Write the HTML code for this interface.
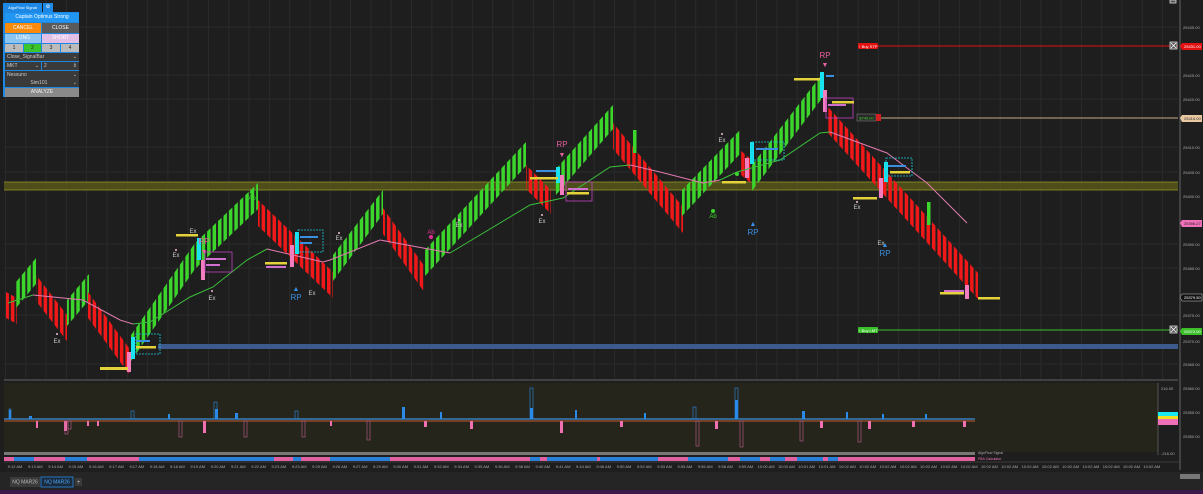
<!DOCTYPE html>
<html><head><meta charset="utf-8"><style>
html,body{margin:0;padding:0;background:#1e1e1e;width:1203px;height:494px;overflow:hidden;font-family:"Liberation Sans",sans-serif}
.p{position:absolute;font-size:5px;color:#fff;text-align:center;line-height:9px;box-sizing:border-box}
</style></head><body>
<svg width="1203" height="494" style="position:absolute;left:0;top:0" font-family="Liberation Sans, sans-serif">
<defs>
<pattern id="G" width="5.45" height="10" patternUnits="userSpaceOnUse"><rect width="3.5" height="10" fill="#3bd52c"/></pattern>
<pattern id="R" width="5.45" height="10" patternUnits="userSpaceOnUse"><rect width="3.5" height="10" fill="#f01818"/></pattern>
<pattern id="vg" width="20.3" height="10" x="5" patternUnits="userSpaceOnUse"><rect width="1" height="10" fill="#2a2a2a"/></pattern>
</defs>
<rect width="1203" height="494" fill="#1e1e1e"/>
<rect x="4" y="0" width="1174" height="380" fill="url(#vg)"/>
<g stroke="#292929" stroke-width="1">
<line x1="4" y1="27" x2="1178" y2="27"/><line x1="4" y1="75" x2="1178" y2="75"/><line x1="4" y1="99" x2="1178" y2="99"/><line x1="4" y1="147" x2="1178" y2="147"/><line x1="4" y1="172" x2="1178" y2="172"/><line x1="4" y1="244" x2="1178" y2="244"/><line x1="4" y1="268" x2="1178" y2="268"/><line x1="4" y1="315" x2="1178" y2="315"/><line x1="4" y1="364" x2="1178" y2="364"/>
</g>
<!-- bands -->
<rect x="4" y="182" width="1174" height="8" fill="#5a5a1a" opacity="0.8"/>
<line x1="4" y1="182" x2="1178" y2="182" stroke="#9a9a28" stroke-width="0.8"/>
<line x1="4" y1="190" x2="1178" y2="190" stroke="#9a9a28" stroke-width="0.8"/>
<rect x="158" y="344" width="1020" height="5" fill="#3d5a8f"/>
<line x1="4" y1="380" x2="1178" y2="380" stroke="#555" stroke-width="1.2"/>
<!-- bars -->
<polygon fill="url(#R)" points="6,292 17,298 17,324 6,318"/>
<polygon fill="url(#G)" points="16,282 36,258 36,284 16,308"/>
<polygon fill="url(#R)" points="36,275 67,315 67,341 36,301"/>
<polygon fill="url(#G)" points="67,300 89,274 89,300 67,326"/>
<polygon fill="url(#R)" points="88,292 129,348 129,374 88,318"/>
<polygon fill="url(#G)" points="131,335 195,243 195,269 131,361"/>
<polygon fill="url(#G)" points="195,243 258,183 258,209 195,269"/>
<polygon fill="url(#R)" points="258,200 333,272 333,298 258,226"/>
<polygon fill="url(#G)" points="333,255 383,190 383,214 333,281"/>
<polygon fill="url(#R)" points="383,208 425,267 425,293 383,234"/>
<polygon fill="url(#G)" points="425,250 526,142 526,166 425,276"/>
<polygon fill="url(#R)" points="526,165 551,190 551,214 526,189"/>
<polygon fill="url(#G)" points="555,170 613,105 613,129 555,196"/>
<polygon fill="url(#R)" points="613,123 683,207 683,233 613,149"/>
<polygon fill="url(#G)" points="682,190 740,130 740,154 682,216"/>
<polygon fill="url(#R)" points="740,150 752,160 752,184 740,174"/>
<polygon fill="url(#G)" points="752,165 823,73 823,97 752,191"/>
<polygon fill="url(#R)" points="828,107 978,273 978,299 828,133"/>
<rect x="633" y="130" width="3.5" height="23" fill="#3bd52c"/>
<rect x="927" y="202" width="3.5" height="23" fill="#3bd52c"/>
<rect x="820" y="72" width="4" height="26" fill="#19e3f0"/>
<rect x="823" y="90" width="4" height="22" fill="#f27ec0"/>
<rect x="131" y="337" width="4" height="22" fill="#19e3f0"/>
<rect x="127" y="352" width="4" height="20" fill="#f27ec0"/>
<rect x="201" y="260" width="4" height="20" fill="#f27ec0"/>
<rect x="197" y="238" width="4" height="22" fill="#19e3f0"/>
<rect x="295" y="232" width="4" height="22" fill="#19e3f0"/>
<rect x="290" y="245" width="4" height="22" fill="#f27ec0"/>
<rect x="560" y="175" width="4" height="20" fill="#f27ec0"/>
<rect x="556" y="167" width="4" height="16" fill="#19e3f0"/>
<rect x="750" y="142" width="4" height="22" fill="#19e3f0"/>
<rect x="745" y="158" width="4" height="20" fill="#f27ec0"/>
<rect x="884" y="162" width="4" height="20" fill="#19e3f0"/>
<rect x="879" y="178" width="4" height="20" fill="#f27ec0"/>
<rect x="965" y="285" width="4" height="14" fill="#f27ec0"/>
<!-- MA -->
<polyline fill="none" stroke="#3bbf3b" stroke-width="1" points="8,303 33,295"/>
<polyline fill="none" stroke="#e07ab0" stroke-width="1" points="33,295 83,300 120,320 133,324"/>
<polyline fill="none" stroke="#3bbf3b" stroke-width="1" points="133,324 150,322 190,297 213,287 247,260 267,249"/>
<polyline fill="none" stroke="#e07ab0" stroke-width="1" points="267,249 323,262 330,260 380,240"/>
<polyline fill="none" stroke="#e07ab0" stroke-width="1" points="380,240 450,253"/>
<polyline fill="none" stroke="#3bbf3b" stroke-width="1" points="450,253 530,205 563,198 610,167 630,165"/>
<polyline fill="none" stroke="#e07ab0" stroke-width="1" points="630,165 660,172 703,183 720,180"/>
<polyline fill="none" stroke="#3bbf3b" stroke-width="1" points="720,180 737,172 780,160 820,133 830,132"/>
<polyline fill="none" stroke="#e07ab0" stroke-width="1" points="830,132 887,153 927,183 967,223"/>
<!-- footprint boxes -->
<g fill="none" stroke-width="0.8">
<rect x="136" y="334" width="24" height="20" stroke="#19c8d8" stroke-dasharray="2,1"/>
<rect x="205" y="252" width="27" height="20" stroke="#c040c0"/>
<rect x="298" y="230" width="25" height="22" stroke="#19c8d8" stroke-dasharray="2,1"/>
<rect x="566" y="182" width="26" height="19" stroke="#c040c0"/>
<rect x="752" y="142" width="32" height="18" stroke="#19c8d8" stroke-dasharray="2,1"/>
<rect x="826" y="98" width="27" height="20" stroke="#c040c0"/>
<rect x="886" y="158" width="26" height="18" stroke="#19c8d8" stroke-dasharray="2,1"/>
</g>
<g fill="#3a8fe0">
<rect x="136" y="340" width="14" height="2"/><rect x="300" y="236" width="18" height="2"/><rect x="300" y="242" width="12" height="2"/><rect x="536" y="170" width="20" height="2"/><rect x="756" y="148" width="22" height="2"/><rect x="888" y="165" width="18" height="2"/><rect x="826" y="75" width="8" height="2"/>
</g>
<g fill="#d070d0">
<rect x="206" y="258" width="20" height="2"/><rect x="206" y="264" width="14" height="2"/><rect x="568" y="188" width="20" height="2"/><rect x="828" y="104" width="18" height="2"/><rect x="944" y="290" width="20" height="3"/><rect x="266" y="266" width="20" height="2"/>
</g>
<g fill="#e3d23a">
<rect x="100" y="367" width="28" height="3"/><rect x="176" y="234" width="22" height="2.5"/><rect x="265" y="262" width="22" height="2.5"/><rect x="530" y="177" width="28" height="2.5"/><rect x="722" y="181" width="24" height="2.5"/><rect x="794" y="78" width="26" height="2.5"/><rect x="832" y="101" width="22" height="2.5"/><rect x="853" y="197" width="24" height="2.5"/><rect x="940" y="292" width="24" height="2.5"/><rect x="978" y="297" width="22" height="2.5"/><rect x="890" y="171" width="20" height="2.5"/><rect x="567" y="192" width="22" height="2.5"/><rect x="136" y="346" width="20" height="2.5"/>
</g>
<!-- markers -->
<g font-size="8" text-anchor="middle">
<text x="204" y="244" fill="#e860a0">RP</text><text x="204" y="254" fill="#e860a0" font-size="7">▼</text>
<text x="562" y="147" fill="#e860a0">RP</text><text x="562" y="157" fill="#e860a0" font-size="7">▼</text>
<text x="825" y="58" fill="#e860a0">RP</text><text x="825" y="67" fill="#e860a0" font-size="7">▼</text>
<text x="131" y="390" fill="#3a8fe0" font-size="7">▲</text><text x="131" y="400" fill="#3a8fe0">RP</text>
<text x="296" y="291" fill="#3a8fe0" font-size="7">▲</text><text x="296" y="300" fill="#3a8fe0">RP</text>
<text x="753" y="226" fill="#3a8fe0" font-size="7">▲</text><text x="753" y="235" fill="#3a8fe0">RP</text>
<text x="885" y="247" fill="#3a8fe0" font-size="7">▲</text><text x="885" y="256" fill="#3a8fe0">RP</text>
</g>
<g font-size="6" fill="#ccc" text-anchor="middle">
<text x="57" y="343">Ex</text><text x="176" y="257">Ex</text><text x="193" y="233">Ex</text><text x="212" y="300">Ex</text><text x="312" y="295">Ex</text><text x="339" y="240">Ex</text><text x="459" y="227">Ex</text><text x="542" y="223">Ex</text><text x="722" y="142">Ex</text><text x="857" y="209">Ex</text><text x="881" y="245">Ex</text>
<text x="252" y="200" fill="#3bd52c">Ab</text><text x="713" y="218" fill="#3bd52c">Ab</text><text x="431" y="234" fill="#e03090">Ab</text>
</g>
<g fill="#f0c0d8"><circle cx="57" cy="334" r="1"/><circle cx="176" cy="250" r="1"/><circle cx="212" cy="291" r="1"/><circle cx="339" cy="233" r="1"/><circle cx="459" cy="220" r="1"/><circle cx="542" cy="215" r="1"/><circle cx="722" cy="134" r="1"/><circle cx="857" cy="202" r="1"/></g>
<circle cx="252" cy="192" r="2" fill="#3bd52c"/><circle cx="713" cy="211" r="2" fill="#3bd52c"/><circle cx="431" cy="237" r="2" fill="#e03090"/><circle cx="737" cy="174" r="2" fill="#3bd52c"/>
<!-- order lines -->
<line x1="878" y1="46" x2="1178" y2="46" stroke="#e31010" stroke-width="1"/>
<rect x="858" y="43" width="20" height="6" rx="1" fill="#e31010"/><text x="868" y="47.8" font-size="4" fill="#fff" text-anchor="middle">↑ Buy STP</text>
<line x1="880" y1="118" x2="1178" y2="118" stroke="#c8a888" stroke-width="1"/>
<rect x="857" y="114" width="19" height="7" fill="#2a2a2a" stroke="#888" stroke-width="0.5"/><text x="866.5" y="119.5" font-size="4" fill="#3bd52c" text-anchor="middle">$740.00</text>
<rect x="876" y="114" width="5" height="7" fill="#d02020"/>
<line x1="878" y1="330" x2="1178" y2="330" stroke="#3bc02c" stroke-width="1"/>
<rect x="858" y="327" width="20" height="6" rx="1" fill="#3bc02c"/><text x="868" y="331.8" font-size="4" fill="#fff" text-anchor="middle">↑ Buy LMT</text>
<g stroke="#ddd" stroke-width="0.8" fill="#555"><rect x="1170" y="42" width="7" height="7"/><rect x="1170" y="326" width="7" height="7"/><rect x="1170" y="0" width="6" height="3"/></g>
<g stroke="#fff" stroke-width="0.8"><path d="M1171 43l5 5M1176 43l-5 5M1171 327l5 5M1176 327l-5 5"/></g>
<!-- right axis -->
<line x1="1180" y1="0" x2="1180" y2="470" stroke="#777" stroke-width="0.8"/>
<g font-size="4" fill="#aaa">
<text x="1183" y="29">25435.00</text><text x="1183" y="77">25425.00</text><text x="1183" y="101">25420.00</text><text x="1183" y="149">25410.00</text><text x="1183" y="174">25405.00</text><text x="1183" y="198">25400.00</text><text x="1183" y="246">25390.00</text><text x="1183" y="270">25385.00</text><text x="1183" y="317">25375.00</text><text x="1183" y="343">25370.00</text><text x="1183" y="366">25365.00</text><text x="1183" y="390">25360.00</text><text x="1183" y="414">25355.00</text><text x="1183" y="438">25350.00</text>
</g>
<path d="M1180 46l2-3h20v7h-20z" fill="#e31010"/><text x="1184" y="48" font-size="4" fill="#fff">25431.00</text>
<path d="M1180 118l2-3h20v7h-20z" fill="#e8c8a0"/><text x="1184" y="120" font-size="4" fill="#333">25416.00</text>
<path d="M1180 223l2-3h20v7h-20z" fill="#f070b8"/><text x="1184" y="225" font-size="4" fill="#222">25396.27</text>
<path d="M1180 297l2-3h20v7h-20z" fill="#111" stroke="#ccc" stroke-width="0.5"/><text x="1184" y="299" font-size="4" fill="#fff">25379.50</text>
<path d="M1180 331l2-3h20v7h-20z" fill="#3bc02c"/><text x="1184" y="333" font-size="4" fill="#fff">25372.00</text>
<!-- lower pane -->
<rect x="4" y="383" width="1154" height="69" fill="#26251b"/>
<line x1="1158" y1="383" x2="1158" y2="455" stroke="#777" stroke-width="0.6"/>
<text x="1161" y="390" font-size="4" fill="#aaa">216.00</text><text x="1161" y="455" font-size="4" fill="#aaa">-216.00</text>
<line x1="4" y1="421" x2="975" y2="421" stroke="#c06030" stroke-width="1"/>
<line x1="4" y1="419" x2="975" y2="419" stroke="#3a8fe0" stroke-width="1.2"/>
<g fill="#2a8ae8">
<rect x="9" y="410" width="2" height="9"/><rect x="29" y="416" width="3" height="3"/><rect x="168" y="414" width="2" height="5"/><rect x="215" y="409" width="3" height="10"/><rect x="235" y="413" width="3" height="6"/><rect x="402" y="407" width="3" height="12"/><rect x="440" y="412" width="2" height="7"/><rect x="530" y="408" width="3" height="11"/><rect x="575" y="410" width="2" height="9"/><rect x="644" y="413" width="2" height="6"/><rect x="735" y="400" width="3" height="19"/><rect x="802" y="411" width="3" height="8"/><rect x="846" y="412" width="2" height="7"/><rect x="1008" y="0" width="0" height="0"/><rect x="882" y="414" width="2" height="5"/><rect x="925" y="414" width="2" height="5"/>
</g>
<g fill="none" stroke="#2a8ae8" stroke-width="0.6"><rect x="9" y="409" width="2" height="10"/><rect x="214" y="402" width="3" height="17"/><rect x="131" y="411" width="3" height="8"/><rect x="295" y="411" width="3" height="8"/><rect x="530" y="388" width="3" height="31"/><rect x="735" y="388" width="3" height="31"/><rect x="693" y="407" width="3" height="12"/></g>
<g fill="#f070b0">
<rect x="36" y="421" width="2" height="7"/><rect x="64" y="421" width="3" height="10"/><rect x="87" y="421" width="2" height="5"/><rect x="97" y="421" width="2" height="5"/><rect x="203" y="421" width="3" height="12"/><rect x="330" y="421" width="2" height="5"/><rect x="424" y="421" width="3" height="6"/><rect x="470" y="421" width="3" height="8"/><rect x="560" y="421" width="3" height="12"/><rect x="620" y="421" width="3" height="6"/><rect x="715" y="421" width="3" height="8"/><rect x="820" y="421" width="3" height="7"/><rect x="868" y="421" width="3" height="8"/><rect x="912" y="421" width="3" height="6"/><rect x="963" y="421" width="3" height="6"/>
</g>
<g fill="none" stroke="#c06090" stroke-width="0.6"><rect x="65" y="421" width="3" height="13"/><rect x="68" y="421" width="3" height="8"/><rect x="179" y="421" width="3" height="16"/><rect x="244" y="421" width="3" height="16"/><rect x="302" y="421" width="3" height="16"/><rect x="367" y="421" width="3" height="19"/><rect x="696" y="421" width="3" height="25"/><rect x="800" y="421" width="3" height="20"/><rect x="858" y="421" width="3" height="21"/><rect x="740" y="421" width="3" height="26"/></g>
<rect x="1158" y="412" width="20" height="4" fill="#1ae8f0"/><rect x="1158" y="416" width="20" height="3" fill="#f0e020"/><rect x="1158" y="419" width="20" height="6" fill="#f070b8"/>
<rect x="4" y="452" width="971" height="3" fill="#777"/>
<text x="978" y="454" font-size="3.5" fill="#aaa">AlgoFlow Signal</text><text x="978" y="460" font-size="3.5" fill="#f070b8">FBA Calculator</text>
<!-- color strip -->
<g>
<rect x="4" y="457" width="971" height="4" fill="#e060a0"/>
<rect x="14" y="457" width="20" height="4" fill="#2a7fd8"/><rect x="65" y="457" width="22" height="4" fill="#2a7fd8"/><rect x="139" y="457" width="135" height="4" fill="#2a7fd8"/><rect x="293" y="457" width="8" height="4" fill="#2a7fd8"/><rect x="330" y="457" width="60" height="4" fill="#2a7fd8"/><rect x="530" y="457" width="10" height="4" fill="#2a7fd8"/><rect x="547" y="457" width="50" height="4" fill="#2a7fd8"/><rect x="600" y="457" width="58" height="4" fill="#2a7fd8"/><rect x="647" y="457" width="5" height="4" fill="#2a7fd8"/><rect x="688" y="457" width="40" height="4" fill="#2a7fd8"/><rect x="740" y="457" width="20" height="4" fill="#2a7fd8"/><rect x="770" y="457" width="15" height="4" fill="#2a7fd8"/><rect x="797" y="457" width="26" height="4" fill="#2a7fd8"/><rect x="828" y="457" width="10" height="4" fill="#2a7fd8"/>
</g>
<!-- time axis -->
<line x1="4" y1="462" x2="1180" y2="462" stroke="#555" stroke-width="0.5"/>
<g font-size="4" fill="#aaa" text-anchor="middle">
<text x="15" y="468">9:12 AM</text><text x="35.3" y="468">9:13 AM</text><text x="55.6" y="468">9:14 AM</text><text x="75.9" y="468">9:15 AM</text><text x="96.2" y="468">9:16 AM</text><text x="116.5" y="468">9:17 AM</text><text x="136.8" y="468">9:17 AM</text><text x="157.1" y="468">9:18 AM</text><text x="177.4" y="468">9:18 AM</text><text x="197.7" y="468">9:19 AM</text><text x="218" y="468">9:20 AM</text><text x="238.3" y="468">9:21 AM</text><text x="258.6" y="468">9:22 AM</text><text x="278.9" y="468">9:23 AM</text><text x="299.2" y="468">9:23 AM</text><text x="319.5" y="468">9:25 AM</text><text x="339.8" y="468">9:26 AM</text><text x="360.1" y="468">9:27 AM</text><text x="380.4" y="468">9:29 AM</text><text x="400.7" y="468">9:30 AM</text><text x="421" y="468">9:31 AM</text><text x="441.3" y="468">9:32 AM</text><text x="461.6" y="468">9:34 AM</text><text x="481.9" y="468">9:35 AM</text><text x="502.2" y="468">9:36 AM</text><text x="522.5" y="468">9:38 AM</text><text x="542.8" y="468">9:40 AM</text><text x="563.1" y="468">9:41 AM</text><text x="583.4" y="468">9:44 AM</text><text x="603.7" y="468">9:46 AM</text><text x="624" y="468">9:50 AM</text><text x="644.3" y="468">9:52 AM</text><text x="664.6" y="468">9:53 AM</text><text x="684.9" y="468">9:55 AM</text><text x="705.2" y="468">9:56 AM</text><text x="725.5" y="468">9:58 AM</text><text x="745.8" y="468">9:59 AM</text><text x="766.1" y="468">10:00 AM</text><text x="786.4" y="468">10:00 AM</text><text x="806.7" y="468">10:01 AM</text><text x="827" y="468">10:01 AM</text><text x="847.3" y="468">10:02 AM</text><text x="867.6" y="468">10:02 AM</text><text x="887.9" y="468">10:02 AM</text><text x="908.2" y="468">10:02 AM</text><text x="928.5" y="468">10:02 AM</text><text x="948.8" y="468">10:02 AM</text><text x="969.1" y="468">10:02 AM</text><text x="989.4" y="468">10:02 AM</text><text x="1009.7" y="468">10:02 AM</text><text x="1030" y="468">10:02 AM</text><text x="1050.3" y="468">10:02 AM</text><text x="1070.6" y="468">10:02 AM</text><text x="1090.9" y="468">10:02 AM</text><text x="1111.2" y="468">10:02 AM</text><text x="1131.5" y="468">10:02 AM</text><text x="1151.8" y="468">10:02 AM</text>
</g>
<rect x="3" y="474" width="4" height="4" fill="none" stroke="#ccc" stroke-width="0.7"/>
<rect x="0" y="472" width="1203" height="18" fill="#252525"/>
<rect x="10" y="477" width="30" height="10" fill="#3a3a3a"/><text x="25" y="483.5" font-size="5" fill="#bbb" text-anchor="middle">NQ MAR26</text>
<rect x="41" y="477" width="32" height="10" fill="#1a2a3a" stroke="#2a8ae8" stroke-width="0.8"/><text x="57" y="483.5" font-size="5" fill="#4aa8ff" text-anchor="middle">NQ MAR26</text>
<rect x="75" y="478" width="7" height="8" fill="#3a3a3a"/><text x="78.5" y="484" font-size="6" fill="#bbb" text-anchor="middle">+</text>
<rect x="1180" y="474" width="20" height="5" fill="#777"/>
<rect x="0" y="490" width="1203" height="4" fill="#3a1a4a"/>
</svg>
<!-- panel -->
<div class="p" style="left:3px;top:3px;width:39px;height:9px;background:#1e88e5;font-size:4px">AlgoFlow Signal</div>
<div class="p" style="left:43px;top:3px;width:10px;height:9px;background:#1e88e5">⚙</div>
<div style="position:absolute;left:3px;top:12px;width:76px;height:85px;background:#1e88e5"></div>
<div class="p" style="left:5px;top:13px;width:74px;height:9px;background:#2196f3">Captain Optimus Strong</div>
<div class="p" style="left:5px;top:23px;width:36px;height:10px;background:#f98a0a;line-height:10px">CANCEL</div>
<div class="p" style="left:42px;top:23px;width:37px;height:10px;background:#5a5a5a;line-height:10px">CLOSE</div>
<div class="p" style="left:5px;top:34px;width:36px;height:9px;background:#8cc6f0">LONG</div>
<div class="p" style="left:42px;top:34px;width:37px;height:9px;background:#e2c0e6">SHORT</div>
<div class="p" style="left:5px;top:44px;width:18px;height:8px;background:#bbb;color:#222;line-height:8px">1</div>
<div class="p" style="left:24px;top:44px;width:17px;height:8px;background:#3bc52c;color:#222;line-height:8px">2</div>
<div class="p" style="left:42px;top:44px;width:18px;height:8px;background:#bbb;color:#222;line-height:8px">3</div>
<div class="p" style="left:61px;top:44px;width:18px;height:8px;background:#bbb;color:#222;line-height:8px">4</div>
<div class="p" style="left:5px;top:53px;width:74px;height:8px;background:#3a3a3a;text-align:left;padding-left:2px;line-height:8px;color:#ccc">Close_SignalBar<span style="float:right;padding-right:2px">⌄</span></div>
<div class="p" style="left:5px;top:62px;width:36px;height:8px;background:#3a3a3a;text-align:left;padding-left:2px;line-height:8px;color:#ccc">MKT<span style="float:right;padding-right:2px">⌄</span></div>
<div class="p" style="left:42px;top:62px;width:37px;height:8px;background:#3a3a3a;text-align:left;padding-left:2px;line-height:8px;color:#ccc">2<span style="float:right;padding-right:2px">⇕</span></div>
<div class="p" style="left:5px;top:71px;width:74px;height:8px;background:#3a3a3a;text-align:left;padding-left:2px;line-height:8px;color:#ccc">Nessuno<span style="float:right;padding-right:2px">⌄</span></div>
<div class="p" style="left:5px;top:79px;width:74px;height:8px;background:#3a3a3a;line-height:8px;color:#ccc">Sim101<span style="float:right;padding-right:2px">⌄</span></div>
<div class="p" style="left:5px;top:88px;width:74px;height:9px;background:#8a8a8a;color:#eee">ANALYZE</div>
</body></html>
